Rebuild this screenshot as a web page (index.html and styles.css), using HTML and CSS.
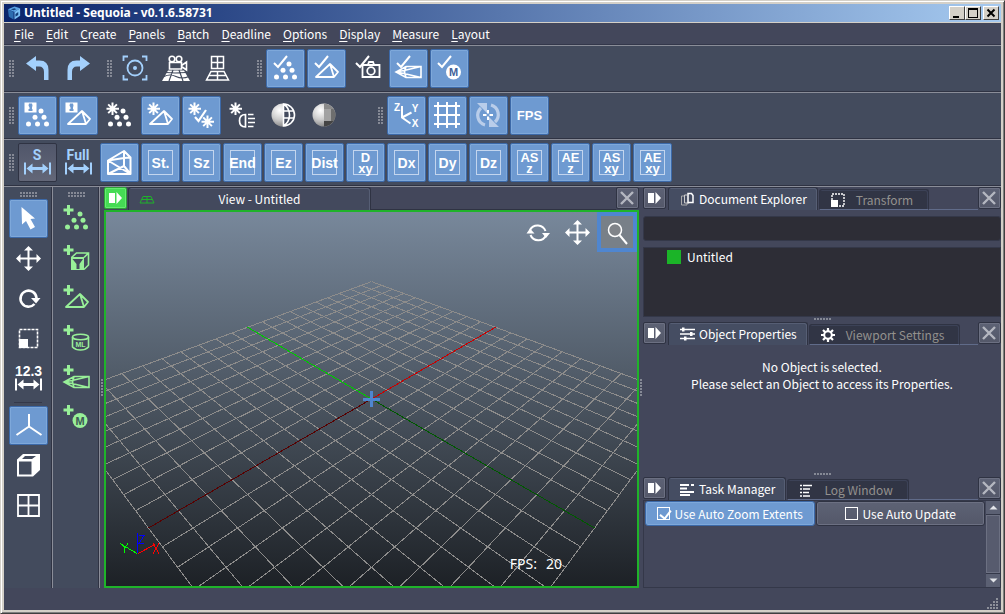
FILE: index.html
```html
<!DOCTYPE html>
<html lang="en">
<head>
<meta charset="utf-8">
<title>Untitled - Sequoia - v0.1.6.58731</title>
<link rel="stylesheet" href="styles.css">
</head>
<body>
<svg class="defs" aria-hidden="true">
  <defs>
    <symbol id="undo" viewBox="0 0 39 39"><path fill="currentColor" d="M8 14.5 18 7v4.500h3.500q9 0 9 9.500v10h-4.500v-8q0-5.500-5-5.500h-3v4.500z"/></symbol>
    <symbol id="check" viewBox="0 0 39 39"><path fill="none" stroke="currentColor" stroke-width="2" d="M8 14l4 4L21 7"/></symbol>
    <symbol id="dots" viewBox="0 0 39 39"><g fill="currentColor"><circle cx="23" cy="15" r="2.500"/><circle cx="17" cy="21.300" r="2.500"/><circle cx="26" cy="21.300" r="2.500"/><circle cx="10.500" cy="28" r="2.500"/><circle cx="19.500" cy="28" r="2.500"/><circle cx="28.500" cy="28" r="2.500"/></g></symbol>
    <symbol id="pyramid" viewBox="0 0 39 39"><path fill="none" stroke="currentColor" stroke-width="1.800" stroke-linejoin="round" d="M9 28 23 15l4 13zM23 15l8 8-4 5"/></symbol>
    <symbol id="star" viewBox="0 0 39 39"><path stroke="currentColor" stroke-width="2" d="M12.500 6.500v12.500M6.500 12.700h12.500M8.200 8.400l8.700 8.700M16.900 8.400l-8.700 8.700"/></symbol>
    <symbol id="bulb" viewBox="0 0 39 39"><path fill="currentColor" fill-rule="evenodd" d="M6.500 6.500h12v10h-12zM11 7.500l-.5 2 1 2v1.500h-1v2h4v-2h-.500V11.500l.5-2-.5-2z"/></symbol>
    <symbol id="plus" viewBox="0 0 39 39"><path stroke="currentColor" stroke-width="3" d="M11.500 6v10M6.500 11h10"/></symbol>
    <symbol id="pencil" viewBox="0 0 39 39"><path fill="none" stroke="currentColor" stroke-width="1.600" d="M17 17.500h15v11H17L7 23zM7 23l8-1.500 17-4M7 23l8 1.500 17 4M17 17.500l-1.500 5.500 1.500 5.500"/></symbol>
    <symbol id="span" viewBox="0 0 39 39"><path fill="currentColor" d="M6 19.500h2v12H6zM31 19.500h2v12h-2zM8.500 25.500l6-5v3.500h10v-3.500l6 5-6 5v-3.500h-10v3.500z"/></symbol>
    <symbol id="move" viewBox="0 0 39 39"><path fill="currentColor" d="M18.500 18.500v-7H15L19.500 7l4.500 4.500h-3.500v7h7V15l4.500 4.500-4.500 4.500v-3.500h-7v7H24L19.500 32 15 27.500h3.500v-7h-7V24L7 19.500l4.500-4.500v3.500z"/></symbol>
    <symbol id="panel" viewBox="0 0 22 22"><path fill="currentColor" d="M5 6h6v10H5zM12.500 5l5.500 6-5.500 6z"/></symbol>
    <symbol id="close" viewBox="0 0 22 22"><path fill="none" stroke="currentColor" stroke-width="2.400" d="M5 5l12 12M17 5L5 17"/></symbol>
    <symbol id="marquee" viewBox="0 0 16 16"><path fill="none" stroke="currentColor" stroke-width="1.400" stroke-dasharray="2 1" d="M2 2h12v12H2z"/><path fill="currentColor" d="M1 8h7v7H1z"/></symbol>
    <radialGradient id="ball" cx=".35" cy=".3" r=".8"><stop offset="0" stop-color="#fff"/><stop offset=".5" stop-color="#ccc"/><stop offset="1" stop-color="#777"/></radialGradient>
  </defs>
</svg>

<div class="window">
  <header class="titlebar">
    <svg class="logo" viewBox="0 0 16 16"><path fill="#2d6db0" d="M1 4l6 3v8l-5-3z"/><path fill="#5ba4e6" d="M1 4l7-3 6 2-6 4z"/><path fill="#7cc0f5" d="M8 7l6-4v8l-6 4z"/><path fill="#123d78" d="M9 9l3-2v3l-3 2zM4 4l4-1 2 1-3 1z"/></svg>
    <h1>Untitled - Sequoia - v0.1.6.58731</h1>
    <div class="caption-buttons">
      <button aria-label="Minimize"><svg viewBox="0 0 12 10"><path d="M2 8h6v2H2z"/></svg></button>
      <button aria-label="Maximize"><svg viewBox="0 0 12 10"><path fill-rule="evenodd" d="M1 0h10v10H1zM2 2v7h8V2z"/></svg></button>
      <button class="caption-close" aria-label="Close"><svg viewBox="0 0 12 10"><path fill="none" stroke="#000" stroke-width="2" d="M2.500 1.500l7 7M9.500 1.500l-7 7"/></svg></button>
    </div>
  </header>

  <nav class="menubar">
    <button><u>F</u>ile</button><button><u>E</u>dit</button><button><u>C</u>reate</button><button><u>P</u>anels</button><button><u>B</u>atch</button><button><u>D</u>eadline</button><button><u>O</u>ptions</button><button><u>D</u>isplay</button><button><u>M</u>easure</button><button><u>L</u>ayout</button>
  </nav>

  <div class="toolbar">
    <div class="group">
      <i class="grip"></i>
      <button class="tool sky" aria-label="Undo"><svg><use href="#undo"/></svg></button>
      <button class="tool sky" aria-label="Redo"><svg class="mirror"><use href="#undo"/></svg></button>
    </div>
    <div class="group">
      <i class="grip"></i>
      <button class="tool sky" aria-label="Zoom extents"><svg fill="none" stroke="currentColor" stroke-width="1.800"><path d="M7.500 12V7.500H12M26 7.500h4.500V12M30.500 26v4.500H26M12 30.500H7.500V26"/><circle cx="19" cy="19" r="7.500"/><circle cx="19" cy="19" r="2" fill="currentColor" stroke="none"/></svg></button>
      <button class="tool" aria-label="Camera on ground"><svg fill="none" stroke="currentColor" stroke-width="1.600"><circle cx="15" cy="10" r="2.800"/><circle cx="22" cy="10" r="2.800"/><path d="M12.500 13.500h12V20h-12zM24.500 16.500l5-3.500v8l-5-3.500"/><path fill="currentColor" stroke="none" d="M11 21.500h16L33 32H5z"/><path stroke="#434b5d" stroke-width="1.200" d="M7 27.500q6-3 12 0t13 0M9 23.500l9 .5 11-.500M16 21l-4 11M22 21l4 11"/></svg></button>
      <button class="tool" aria-label="Window on ground"><svg fill="none" stroke="currentColor" stroke-width="1.500"><path d="M13.500 7.500h12v12h-12zM19.500 7v13M13 13.500h13M13 22.500h13l4.500 8.500h-22zM11 26.500h17M19.500 22v9"/></svg></button>
    </div>
    <div class="group far">
      <i class="grip"></i>
      <button class="tool on" aria-label="Show points"><svg><use href="#check"/><use href="#dots"/></svg></button>
      <button class="tool on" aria-label="Show meshes"><svg><use href="#check"/><use href="#pyramid"/></svg></button>
      <button class="tool" aria-label="Show cameras"><svg fill="none" stroke="currentColor" stroke-width="1.800"><use href="#check"/><path d="M14.500 16h17v12h-17zM20 15.500l1-2.500h4l1 2.500"/><circle cx="23" cy="22" r="3.800"/></svg></button>
      <button class="tool on" aria-label="Show projections"><svg><use href="#check"/><use href="#pencil"/></svg></button>
      <button class="tool on" aria-label="Show measures"><svg><use href="#check"/><circle cx="23.500" cy="23" r="7.500" fill="currentColor"/><text class="m" x="23.500" y="27">M</text></svg></button>
    </div>
  </div>

  <div class="toolbar">
    <div class="group">
      <i class="grip"></i>
      <button class="tool on" aria-label="Point headlight"><svg><use href="#bulb"/><use href="#dots"/></svg></button>
      <button class="tool on" aria-label="Mesh headlight"><svg><use href="#bulb"/><use href="#pyramid"/></svg></button>
      <button class="tool" aria-label="Light points"><svg><use href="#star"/><use href="#dots"/></svg></button>
      <button class="tool on" aria-label="Light meshes"><svg><use href="#star"/><use href="#pyramid"/></svg></button>
      <button class="tool on" aria-label="Toggle lights"><svg><use href="#star"/><use href="#star" x="13" y="13"/><path fill="none" stroke="currentColor" stroke-width="2.200" d="M13 21l3.500 4L24 14"/></svg></button>
      <button class="tool" aria-label="Headlamp"><svg fill="none" stroke="currentColor" stroke-width="1.700"><use href="#star"/><path d="M22.500 18.500v12.500q-6 0-6-6.200t6-6.300zM25 18.500h5.500M25 22.500h7M25 26.500h7M25 30.500h5.500"/></svg></button>
      <button class="tool" aria-label="Solid and wire"><svg><circle cx="19" cy="19" r="11.500" fill="url(#ball)"/><path fill="#434b5d" d="M20 8a11 11 0 0 1 0 22z"/><path fill="none" stroke="currentColor" stroke-width="1.600" d="M19.500 8a11 11 0 0 1 0 22zM19 15h11M19 22h11M19.500 8q6 4 6 11t-6 11"/></svg></button>
      <button class="tool" aria-label="Shading"><svg><circle cx="19" cy="19" r="11.500" fill="url(#ball)"/><path fill="#8a8a8a" d="M19 7.500A11.500 11.500 0 0 1 28.500 13H19z"/><path fill="#6e6e6e" d="M28.500 13q2 3 2 6t-2 6H26V13z"/><path fill="#444" d="M28.500 25A11.500 11.500 0 0 1 19 30.500V25z"/><path fill="#a2a2a2" d="M19 13h7v12h-7z"/></svg></button>
    </div>
    <div class="group farther">
      <i class="grip"></i>
      <button class="tool on" aria-label="Axes"><svg><path fill="none" stroke="currentColor" stroke-width="2" d="M15 10v11.500l8.500 6M15 21.500l9.500-5"/><text class="ax" x="10" y="15">Z</text><text class="ax" x="28" y="16">Y</text><text class="ax" x="28" y="31">X</text></svg></button>
      <button class="tool on" aria-label="Grid"><svg><path fill="none" stroke="currentColor" stroke-width="2" d="M6 10h26M6 19h26M6 28h26M10 6v26M19 6v26M28 6v26"/></svg></button>
      <button class="tool on" aria-label="Orbit point"><svg><g fill="none" stroke="#b9cdea" stroke-width="3.200"><path d="M16 29A10 10 0 0 1 12 12"/><path d="M22 9A10 10 0 0 1 26 26"/></g><path fill="#b9cdea" d="M8 7h10v10zM30 31H20V21z"/><path stroke="currentColor" stroke-width="2" d="M19 14v3.500M19 20.500V24M14 19h3.500M20.500 19H24"/></svg></button>
      <button class="tool on fps">FPS</button>
    </div>
  </div>

  <div class="toolbar">
    <div class="group">
      <i class="grip"></i>
      <button class="tool pressed sky" aria-label="S range"><svg><text class="wide" x="19" y="17">S</text><use href="#span"/></svg></button>
      <button class="tool sky" aria-label="Full range"><svg><text class="wide" x="19" y="17">Full</text><use href="#span"/></svg></button>
      <button class="tool on" aria-label="Frustum"><svg><path fill="none" stroke="currentColor" stroke-width="2" stroke-linejoin="round" d="M8 17.500 24 8l6.500 6.500V31H8zM8 17.500l16-2.500 6.500-.500M8 17.500 30.500 31M8 31l16-8 6.500 8M24 8v15"/></svg></button>
      <button class="tool on"><span class="boxed">St.</span></button>
      <button class="tool on"><span class="boxed">Sz</span></button>
      <button class="tool on"><span class="boxed">End</span></button>
      <button class="tool on"><span class="boxed">Ez</span></button>
      <button class="tool on"><span class="boxed">Dist</span></button>
      <button class="tool on"><span class="boxed two">D<br>xy</span></button>
      <button class="tool on"><span class="boxed">Dx</span></button>
      <button class="tool on"><span class="boxed">Dy</span></button>
      <button class="tool on"><span class="boxed">Dz</span></button>
      <button class="tool on"><span class="boxed two">AS<br>z</span></button>
      <button class="tool on"><span class="boxed two">AE<br>z</span></button>
      <button class="tool on"><span class="boxed two">AS<br>xy</span></button>
      <button class="tool on"><span class="boxed two">AE<br>xy</span></button>
    </div>
  </div>

  <main class="workspace">
    <div class="sidebar">
      <i class="grip flat"></i>
      <button class="tool on" aria-label="Select"><svg><path fill="currentColor" d="M12.500 8 26 19.500l-4.500.5 4.500 8-4.500 2.500-4.500-8.500-4 3.500z"/></svg></button>
      <button class="tool" aria-label="Move"><svg><use href="#move"/></svg></button>
      <button class="tool" aria-label="Rotate"><svg><path fill="none" stroke="currentColor" stroke-width="2.600" d="M25.500 25a8 8 0 1 1 2-6"/><path fill="currentColor" d="M22 19h9.500L27 24.500z"/></svg></button>
      <button class="tool" aria-label="Scale"><svg><path fill="none" stroke="currentColor" stroke-width="1.600" stroke-dasharray="3 1" d="M10.500 10.500h18v18h-18z"/><path fill="currentColor" d="M10 20h9v9h-9z"/></svg></button>
      <button class="tool" aria-label="Measure distance"><svg><text class="num" x="19.500" y="17">12.3</text><use href="#span"/></svg></button>
      <hr>
      <button class="tool on" aria-label="Axis tripod"><svg><path fill="none" stroke="currentColor" stroke-width="2" d="M20 8v13M20 20.500 7.500 29M20 20.500 32.500 29"/></svg></button>
      <button class="tool" aria-label="Perspective box"><svg><path fill="currentColor" fill-rule="evenodd" d="M8 13.500 14 8h17v16l-7 6.500H8zM10 15.500v13h12.500v-13zM13 13h10l4-3H16z"/></svg></button>
      <button class="tool" aria-label="Four views"><svg><path fill="none" stroke="currentColor" stroke-width="1.800" d="M9 9h21v21H9zM19.500 9v21M9 19.500h21"/></svg></button>
    </div>
    <div class="sidebar create">
      <i class="grip flat"></i>
      <button class="tool" aria-label="Create points"><svg><use href="#plus"/><use href="#dots"/></svg></button>
      <button class="tool" aria-label="Create filter"><svg><use href="#plus"/><path fill="currentColor" fill-rule="evenodd" d="M14 18h13v13H14zM15.500 20l4 5v5h3v-5l3.500-5z"/><path fill="none" stroke="currentColor" stroke-width="1.600" d="M14.500 18.500l5-4.500h12v12L27 30.500M27 18.500l4.500-4.500"/></svg></button>
      <button class="tool" aria-label="Create mesh"><svg><use href="#plus"/><use href="#pyramid"/></svg></button>
      <button class="tool" aria-label="Create markup"><svg><use href="#plus"/><g fill="none" stroke="currentColor" stroke-width="1.600"><ellipse cx="23.500" cy="18" rx="8" ry="2.800"/><path d="M15.500 18v10q3 3 8 3t8-3V18"/></g><text class="ml" x="23.500" y="28">ML</text></svg></button>
      <button class="tool" aria-label="Create projection"><svg><use href="#plus"/><use href="#pencil"/></svg></button>
      <button class="tool" aria-label="Create measure"><svg><use href="#plus"/><circle cx="23" cy="21.500" r="7.500" fill="currentColor"/><text class="m" x="23" y="25.500">M</text></svg></button>
    </div>

    <i class="grip splitter"></i>

    <section class="dock view">
      <div class="tabs">
        <button class="mini green" aria-label="Dock view"><svg><use href="#panel"/></svg></button>
        <button class="tab active wide-tab"><svg class="ico" viewBox="0 0 16 16"><path fill="none" stroke="#1fb32a" d="M4 5.500h8l3 6.500H1zM3 8.500h10.500M8 5v7"/></svg><span>View - Untitled</span></button>
        <span class="rule"></span>
        <button class="mini" aria-label="Close view"><svg class="dim"><use href="#close"/></svg></button>
      </div>
      <div class="viewport">
        <svg class="scene" viewBox="0 0 531 374" preserveAspectRatio="xMidYMid slice" role="img" aria-label="Perspective ground grid">
          <path id="grid" class="grid-lines"/>
          <path id="x-far" class="x-far"/><path id="x-near" class="x-near"/>
          <path id="y-far" class="y-far"/><path id="y-near" class="y-near"/>
          <path stroke="#4f86d0" stroke-width="3" d="M265.500 179v16M257 187.500h17"/>
          <path stroke="#00f" d="M31.500 341V321M33 323.500h5l-5 8h5"/>
          <path stroke="#f00" d="M32 341.500l17-9M47 331.500l6 10M53 331.500l-6 10"/>
          <path stroke="#0f0" d="M31 341.500l-17-10M16 332.500l3 3 3-4M19 335.500l-1 6"/>
        </svg>
        <div class="nav-tools">
          <button aria-label="Orbit"><svg><path fill="none" stroke="currentColor" stroke-width="2" d="M12 17a8.500 8.500 0 0 1 15.500 1M28 22.500A8.500 8.500 0 0 1 12.500 22"/><path fill="currentColor" d="M8.500 20.500h8L12 15.500zM24 20h8l-4 5z"/></svg></button>
          <button aria-label="Pan"><svg><use href="#move"/></svg></button>
          <button class="current" aria-label="Zoom"><svg><circle cx="17" cy="17" r="6.500" fill="#808489" stroke="currentColor" stroke-width="1.500"/><path stroke="currentColor" stroke-width="2" d="M21.500 22l7.500 9"/></svg></button>
        </div>
        <div class="fps-readout"><span>FPS:</span><span>20</span></div>
      </div>
    </section>

    <i class="grip splitter"></i>

    <div class="panels">
      <section class="dock">
        <div class="tabs">
          <button class="mini" aria-label="Dock explorer"><svg><use href="#panel"/></svg></button>
          <button class="tab active"><svg class="ico" viewBox="0 0 16 16" fill="none" stroke="currentColor"><path stroke="#aaa" d="M6 5H2.500v9H8v-2"/><path stroke="#ccc" d="M8 4H5.500v8H10v-1"/><path stroke-width="1.500" d="M9 2.500h3.500L14 4.500v7H9z"/></svg>Document Explorer</button>
          <button class="tab idle"><svg class="ico"><use href="#marquee"/></svg>Transform</button>
          <span class="rule"></span>
          <button class="mini" aria-label="Close explorer"><svg class="dim"><use href="#close"/></svg></button>
        </div>
        <input class="search" type="text" aria-label="Filter documents">
        <ul class="tree"><li><i class="swatch"></i>Untitled</li></ul>
        <i class="grip divider"></i>
      </section>
      <section class="dock">
        <div class="tabs">
          <button class="mini" aria-label="Dock properties"><svg><use href="#panel"/></svg></button>
          <button class="tab active"><svg class="ico" viewBox="0 0 16 16"><path stroke="currentColor" stroke-width="1.500" d="M1 3.500h15M1 8h15M1 12.500h15"/><path fill="currentColor" d="M3 1.500h2.500v4H3zM11 6h2.500v4H11zM5 10.500h2.500v4H5z"/></svg>Object Properties</button>
          <button class="tab idle"><svg class="ico" viewBox="0 0 16 16"><circle cx="8" cy="8" r="3.800" fill="none" stroke="#fff" stroke-width="2"/><path stroke="#fff" stroke-width="2.200" d="M8 1v3M8 12v3M1 8h3M12 8h3M3 3l2 2M11 11l2 2M13 3l-2 2M5 11l-2 2"/></svg>Viewport Settings</button>
          <span class="rule"></span>
          <button class="mini" aria-label="Close properties"><svg class="dim"><use href="#close"/></svg></button>
        </div>
        <p class="notice">No Object is selected.<br>Please select an Object to access its Properties.</p>
        <i class="grip divider"></i>
      </section>
      <section class="dock">
        <div class="tabs">
          <button class="mini" aria-label="Dock tasks"><svg><use href="#panel"/></svg></button>
          <button class="tab active"><svg class="ico" viewBox="0 0 16 16"><path stroke="currentColor" stroke-width="2" d="M1 4h9M12 4h3M1 7.500h7M1 11h14M1 14h10"/></svg>Task Manager</button>
          <button class="tab idle"><svg class="ico" viewBox="0 0 16 16"><path stroke="#fff" stroke-width="1.500" d="M2 3.500h2M5 3.500h9M2 7h2M5 7h7M2 10.500h2M5 10.500h6M2 14h2M5 14h7"/></svg>Log Window</button>
          <span class="rule"></span>
          <button class="mini" aria-label="Close tasks"><svg class="dim"><use href="#close"/></svg></button>
        </div>
        <div class="tasks">
          <div class="toggles">
            <label class="toggle"><input type="checkbox" checked>Use Auto Zoom Extents</label>
            <label class="toggle"><input type="checkbox">Use Auto Update</label>
          </div>
          <div class="scrollbar">
            <button aria-label="Scroll up"><svg viewBox="0 0 9 9"><path d="M0.500 6.500h8l-4-4z"/></svg></button>
            <div class="thumb"></div>
            <button aria-label="Scroll down"><svg viewBox="0 0 9 9"><path d="M0.500 2.500h8l-4 4z"/></svg></button>
          </div>
        </div>
      </section>
    </div>
  </main>

  <footer class="status"><svg viewBox="0 0 12 12"><path fill="#8d909a" d="M9 0h2v2H9zM6 3h2v2H6zM9 3h2v2H9zM3 6h2v2H3zM6 6h2v2H6zM9 6h2v2H9zM0 9h2v2H0zM3 9h2v2H3zM6 9h2v2H6zM9 9h2v2H9z"/></svg></footer>
</div>
<script src="grid.js"></script>
</body>
</html>
```
FILE: styles.css
```css
* { box-sizing: border-box; }

body {
  margin: 0;
  font: 12px/18px "Noto Sans CJK SC", "Noto Sans", sans-serif;
  color: #fff;
}

button {
  margin: 0;
  padding: 0;
  border: 0;
  background: none;
  color: inherit;
  font: inherit;
}

.defs { position: absolute; width: 0; height: 0; }

.window {
  display: flex;
  flex-direction: column;
  min-height: 100vh;
  padding: 3px;
  border: 1px solid;
  border-color: #d4d0c8 #404040 #404040 #d4d0c8;
  background: #43475b;
  box-shadow: inset 1px 1px #fff, inset -1px -1px #808080, inset 0 0 0 3px #d4d0c8;
}

/* title bar */
.titlebar {
  display: flex;
  align-items: center;
  height: 19px;
  padding: 0 2px 0 3px;
  border-bottom: 1px solid #d4d0c8;
  background: linear-gradient(90deg, #0a246a, #a6caf0);
}
.titlebar h1 {
  flex: 1;
  margin: 0 0 0 2px;
  font: bold 12px/16px "Noto Sans", sans-serif;
}
.logo { width: 15px; height: 16px; }
.caption-buttons { display: flex; }
.caption-buttons button {
  display: grid;
  place-items: center;
  width: 16px;
  height: 14px;
  border: 1px solid;
  border-color: #fff #404040 #404040 #fff;
  background: #d4d0c8;
}
.caption-buttons svg { width: 12px; height: 10px; }
.caption-buttons .caption-close { margin-left: 2px; }

/* menus */
.menubar {
  display: flex;
  height: 22px;
  padding: 0 4px;
  border-bottom: 1px solid #33374a;
}
.menubar button { padding: 0 6px; }
.menubar u { text-underline-offset: 2px; }

/* toolbars */
.toolbar {
  display: flex;
  padding: 3px 5px;
  border-top: 1px solid #8a8d98;
  border-bottom: 1px solid #2f3343;
  background: #434b5d;
}
.group { display: flex; align-items: center; gap: 2px; }
.group + .group { margin-left: 9px; }
.group + .far { margin-left: 20px; }
.group + .farther { margin-left: 34px; }
.group .grip { margin-right: 2px; }

.grip {
  flex: none;
  width: 5px;
  height: 17px;
  background: conic-gradient(from 0deg at 2px 2px, transparent 0 270deg, #858995 0) 0 0 / 3px 3px;
}
.grip.flat { width: 17px; height: 5px; margin-bottom: 1px; }
.grip.splitter { align-self: center; width: 2px; margin: 0 1px; }
.grip.divider { align-self: center; width: 17px; height: 2px; margin: 1px 0 2px; }

.tool {
  display: grid;
  flex: none;
  place-items: center;
  width: 39px;
  height: 39px;
}
.tool svg { width: 39px; height: 39px; margin: -1px; }
.tool svg.mirror { transform: scaleX(-1); }
.tool.on {
  border: 1px solid #3c69a8;
  border-radius: 2px;
  background: #6e9ad1;
  box-shadow: inset 0 0 0 1px #7ea8da;
}
.tool.pressed {
  border: 1px solid #2f3343;
  border-radius: 2px;
  background: linear-gradient(#50566a, #636778);
}
.sky { color: #a3d0fc; }
.tool.fps { font: bold 13px/16px "Liberation Sans", sans-serif; }

text { font: bold 8px "Liberation Sans", sans-serif; fill: currentColor; text-anchor: middle; }
text.ax { font-size: 10px; }
text.m { font-size: 11px; fill: #41629a; }
text.wide { font: bold 14px "Roboto", sans-serif; }
text.num { font-size: 14px; }
text.ml { font-size: 7px; }
.create text.m { fill: #3d5a55; }

.boxed {
  display: flex;
  align-items: center;
  justify-content: center;
  width: 25px;
  height: 25px;
  border: 1px solid #c3d5ee;
  font: bold 14px/12px "Liberation Sans", sans-serif;
}
.boxed.two { font-size: 13px; line-height: 11px; }

/* workspace */
.workspace {
  display: flex;
  flex: 1;
  border-top: 1px solid #8a8d98;
}
.sidebar {
  display: flex;
  flex: none;
  flex-direction: column;
  align-items: center;
  gap: 1px;
  width: 49px;
  padding-top: 5px;
  border-right: 1px solid #8a8d98;
  background: #434b5d;
  box-shadow: inset -1px 0 #2f3343;
}
.sidebar.create { width: 47px; color: #98f098; }
.sidebar hr {
  width: 28px;
  height: 1px;
  margin: 3px 0 2px;
  border: 0;
  background: #343849;
}

.dock { display: flex; flex-direction: column; min-height: 0; }
.view { flex: 1; min-width: 0; }
.tabs { display: flex; height: 23px; }
.mini {
  flex: none;
  width: 23px;
  height: 22px;
  border: 1px solid #2f3343;
  border-radius: 2px;
  background: linear-gradient(#5d6275, #545869);
  box-shadow: inset 0 0 0 1px #6c7082;
}
.mini svg { display: block; width: 22px; height: 22px; margin: -1px; }
.mini .dim { color: #b4b7c0; }
.mini.green { border-color: #2e9f38; background: #45db54; box-shadow: inset 0 0 0 1px #65ec70; }

.tab {
  display: flex;
  align-items: center;
  gap: 4px;
  margin-left: 2px;
  padding: 0 10px;
  border: 1px solid #2f3343;
  border-bottom: 0;
  border-radius: 3px 3px 0 0;
  background: #454d62;
  box-shadow: inset -1px 1px #565e74;
  white-space: nowrap;
}
.tab .ico { flex: none; width: 16px; height: 16px; }
.tab.idle {
  gap: 10px;
  margin: 2px 0 0 1px;
  padding: 1px 15px 0 10px;
  border-bottom: 1px solid #606b89;
  background: #313545;
  box-shadow: inset -1px 1px #3c4257;
  color: #93918e;
}
.tab.idle .ico { color: #fff; }
.tab.wide-tab { flex: 0 1 243px; margin-left: 1px; background: #43495d; }
.tab.wide-tab span { flex: 1; text-align: center; }
.rule { flex: 1; border-bottom: 1px solid #606b89; }
.view .rule { border-color: #2f3343; }

/* viewport */
.viewport {
  position: relative;
  flex: 1;
  border: 2px solid #1fb32a;
  background: linear-gradient(#78889b, #4b5561 50%, #1d2126);
}
.scene { position: absolute; inset: 0; width: 100%; height: 100%; }
.scene path { shape-rendering: crispEdges; fill: none; }
.grid-lines { stroke: #8d8c8b; }
.x-far { stroke: #c80000; }
.x-near { stroke: #580000; }
.y-far { stroke: #00c800; }
.y-near { stroke: #005800; }
.nav-tools { position: absolute; top: 0; right: 0; display: flex; }
.nav-tools button { display: grid; place-items: center; width: 40px; height: 40px; }
.nav-tools svg { width: 39px; height: 39px; }
.nav-tools .current { border: 4px solid #4f86d0; background: #788088; }
.nav-tools .current svg { margin: -4px; }
.fps-readout {
  position: absolute;
  right: 75px;
  bottom: 12px;
  display: flex;
  gap: 9px;
  font: 14px/20px "Noto Sans", sans-serif;
}

/* right-hand panels */
.panels {
  display: grid;
  grid-template-rows: 135fr 155fr 111fr;
  grid-template-columns: minmax(0, 1fr);
  flex: none;
  width: 358px;
}
.search {
  height: 25px;
  margin: 6px 0;
  padding: 0 6px;
  border: 1px solid #343849;
  border-radius: 3px;
  background: #2d2d36;
  color: inherit;
  font: inherit;
}
.tree {
  flex: 1;
  margin: 0;
  padding: 0 0 0 23px;
  border: 1px solid #343849;
  background: #2d2d36;
  list-style: none;
}
.tree li { display: flex; align-items: center; gap: 6px; }
.swatch { width: 14px; height: 14px; background: #1bb428; }
.notice { flex: 1; margin: 13px 0 0; line-height: 17px; text-align: center; }

.tasks { display: flex; flex: 1; border: 1px solid #343849; }
.toggles { display: flex; flex: 1; align-items: flex-start; gap: 1px; padding: 0 1px; }
.toggle {
  display: flex;
  flex: 1 1 0;
  align-items: center;
  justify-content: center;
  gap: 5px;
  height: 25px;
  border: 1px solid #2f3343;
  border-radius: 3px;
  background: linear-gradient(#5d6275, #545869);
  box-shadow: inset 0 0 0 1px #6c7082;
  white-space: nowrap;
}
.toggle:has(:checked) {
  border-color: #3c69a8;
  background: #6e9ad1;
  box-shadow: inset 0 0 0 1px #7ea8da;
}
.toggle input {
  display: grid;
  width: 13px;
  height: 13px;
  margin: 0;
  border: 1px solid #fff;
  appearance: none;
}
.toggle input:checked::after {
  content: "";
  width: 5px;
  height: 9px;
  margin: 0 0 0 4px;
  border: solid #fff;
  border-width: 0 2px 2px 0;
  transform: rotate(38deg);
}
.scrollbar { display: flex; flex-direction: column; width: 14px; background: #343849; gap: 1px; }
.scrollbar button { display: grid; place-items: center; height: 13px; background: #5b6073; }
.scrollbar svg { width: 9px; height: 9px; fill: #e3e5ea; }
.thumb { flex: 1; border: 1px solid #6c7082; background: #575b6e; }

.status { display: flex; align-items: flex-end; justify-content: flex-end; height: 22px; padding: 0 2px; }
.status svg { width: 12px; height: 12px; }
```
FILE: grid.js
```js
// Projects the ground plane (u, v in -1..1) into the scene's own units.
const CENTER_X = 265.5;
const CENTER_Y = 187;
const SPREAD = 159.4;
const RISE = 92.2;
const DEPTH = 0.2853;
const STEPS = 10;

function project(u, v) {
  const w = 1 + DEPTH * (u + v);
  const x = CENTER_X + (SPREAD * (u - v)) / w;
  const y = CENTER_Y - (RISE * (u + v)) / w;
  return x.toFixed(1) + " " + y.toFixed(1);
}

function line(u1, v1, u2, v2) {
  return "M" + project(u1, v1) + "L" + project(u2, v2);
}

let grid = "";
for (let i = -STEPS; i <= STEPS; i++) {
  if (i === 0) continue;
  const t = i / STEPS;
  grid += line(t, -1, t, 1) + line(-1, t, 1, t);
}

document.getElementById("grid").setAttribute("d", grid);
document.getElementById("x-far").setAttribute("d", line(0, 0, 1, 0));
document.getElementById("x-near").setAttribute("d", line(-1, 0, 0, 0));
document.getElementById("y-far").setAttribute("d", line(0, 0, 0, 1));
document.getElementById("y-near").setAttribute("d", line(0, -1, 0, 0));
```
